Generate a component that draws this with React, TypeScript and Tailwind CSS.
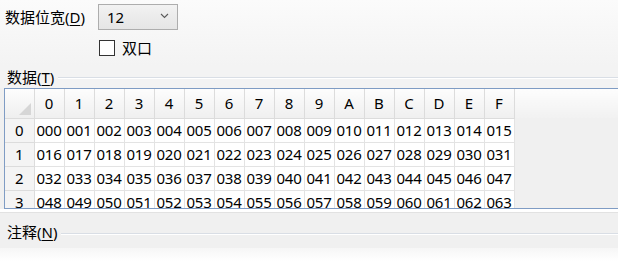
import React from 'react';

const cols = ['0', '1', '2', '3', '4', '5', '6', '7', '8', '9', 'A', 'B', 'C', 'D', 'E', 'F'];
const rows = [0, 1, 2, 3];

const pad3 = (n: number) => String(n).padStart(3, '0');

export default function App() {
  return (
    <div
      className="w-[618px] h-[261px] overflow-hidden bg-[#f0f0f0] text-black flex flex-col"
      style={{ fontFamily: '"Noto Sans", "Noto Sans CJK SC", sans-serif' }}
    >
      {/* settings */}
      <div className="bg-gradient-to-b from-[#fbfbfb] to-[#f3f3f3] h-[66px] flex flex-col">
        <div className="flex items-center h-[26px] mt-[4px]">
          <span className="ml-[5px] w-[93px] text-[15px] leading-none">
            数据位宽(<span className="underline underline-offset-2">D</span>)
          </span>
          <div className="w-[80px] h-[26px] border border-[#adadad] bg-gradient-to-b from-[#f2f2f2] to-[#e5e5e5] flex items-center justify-between pl-[8px] pr-[8px]">
            <span className="text-[15px] leading-none">12</span>
            <svg width="9" height="6" viewBox="0 0 9 6" className="mt-[-2px]">
              <path d="M1 1 L4.5 4.5 L8 1" fill="none" stroke="#5a5a5a" strokeWidth="1.1" />
            </svg>
          </div>
        </div>
        <div className="flex items-center mt-[10px] ml-[99px] h-[16px]">
          <div className="w-[16px] h-[16px] border border-[#333] bg-white" />
          <span className="ml-[7px] text-[15px] leading-none">双口</span>
        </div>
      </div>

      {/* group: data */}
      <div className="flex items-center h-[22px] bg-[#f3f3f3]">
        <span className="ml-[7px] text-[15px] leading-none">
          数据(<span className="underline underline-offset-2">T</span>)
        </span>
        <div className="flex-1 ml-[4px] mt-[2px] h-[2px] border-t border-[#d9dee5] border-b border-b-white" />
      </div>

      <div className="ml-[4px] h-[121px] border-y border-l border-[#7f9cc4] bg-[#f0f0f0] overflow-hidden">
        <table className="w-full border-collapse table-fixed">
          <colgroup>
            <col style={{ width: 29 }} />
            {cols.map((c) => (
              <col key={c} style={{ width: 30 }} />
            ))}
            <col />
          </colgroup>
          <thead>
            <tr className="h-[29px]">
              <th className="relative p-0 bg-gradient-to-b from-[#fdfdfd] to-[#efefef] border-r border-b border-[#dcdcdc]">
                <svg width="12" height="12" viewBox="0 0 12 12" className="absolute right-[3px] bottom-[3px]">
                  <path d="M12 0 L12 12 L0 12 Z" fill="#d6d6d6" />
                </svg>
              </th>
              {cols.map((c) => (
                <th
                  key={c}
                  className="p-0 font-normal text-[15px] leading-none text-center bg-gradient-to-b from-[#fdfdfd] to-[#efefef] border-r border-b border-[#dcdcdc]"
                >
                  {c}
                </th>
              ))}
              <th className="p-0 bg-gradient-to-b from-[#fdfdfd] to-[#f1f1f1]" />
            </tr>
          </thead>
          <tbody>
            {rows.map((r) => (
              <tr key={r} className="h-[24px]">
                <td className="p-0 text-[15px] leading-none text-center bg-[#f4f4f4] border-r border-b border-[#dcdcdc]">
                  {r}
                </td>
                {cols.map((c, i) => (
                  <td
                    key={c}
                    className="p-0 text-[15px] leading-none text-center bg-white border-r border-b border-[#e3e3e3] tracking-[-0.3px]"
                  >
                    {pad3(r * 16 + i)}
                  </td>
                ))}
                <td className="p-0 bg-[#f0f0f0]" />
              </tr>
            ))}
          </tbody>
        </table>
      </div>

      {/* separator */}
      <div className="h-[3px] bg-white" />
      <div className="h-[1px] bg-[#e2e2e2]" />

      {/* group: notes */}
      <div className="flex items-center h-[31px] mt-[4px] bg-[#f0f0f0]">
        <span className="ml-[7px] text-[15px] leading-none">
          注释(<span className="underline underline-offset-2">N</span>)
        </span>
        <div className="flex-1 ml-[4px] mt-[2px] h-[2px] border-t border-[#d9dee5] border-b border-b-white" />
      </div>
      <div className="flex-1 bg-gradient-to-b from-[#f6f6f6] to-white" />
    </div>
  );
}
